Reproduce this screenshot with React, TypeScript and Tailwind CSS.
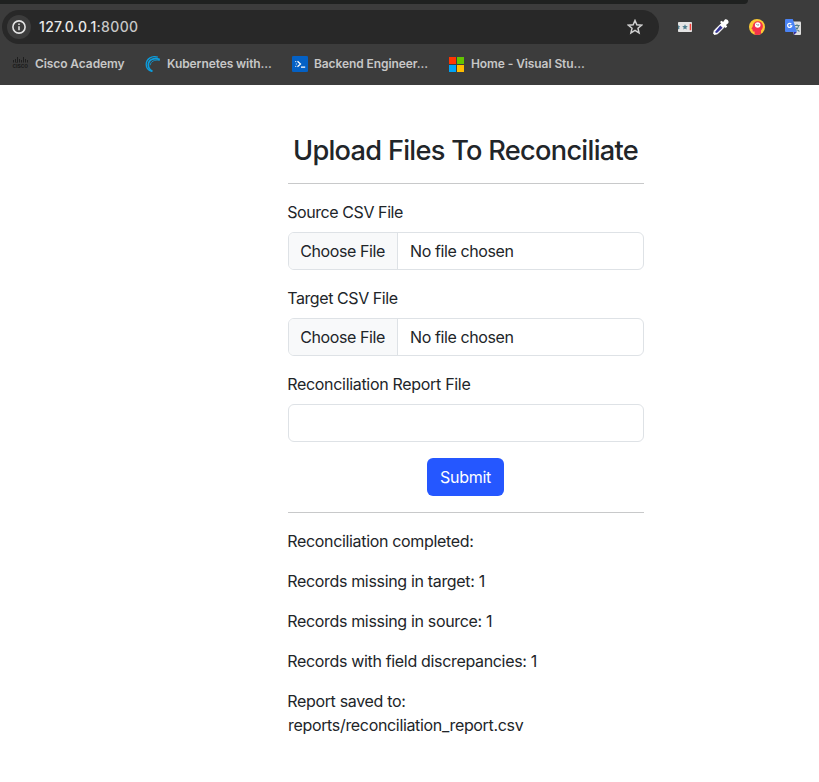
import type { ReactNode } from "react";

function InfoIcon() {
  return (
    <svg width="14" height="14" viewBox="0 0 14 14" fill="none">
      <circle cx="7" cy="7" r="6.1" stroke="#e3e3e3" strokeWidth="1.6" />
      <path d="M7 6.3v4M7 3.6v1.5" stroke="#e3e3e3" strokeWidth="1.5" />
    </svg>
  );
}

function StarIcon() {
  return (
    <svg width="16" height="16" viewBox="0 0 16 16" fill="none" stroke="#d0d0d0" strokeWidth="1.5">
      <path d="M8 1.5l1.85 4.3 4.7.4-3.56 3.1 1.07 4.6L8 11.45 3.94 13.9 5 9.3 1.45 6.2l4.7-.4z" />
    </svg>
  );
}

function TicketIcon() {
  return (
    <svg width="14" height="10" viewBox="0 0 14 10">
      <rect width="14" height="10" rx="0.8" fill="#e4e4e4" />
      <path d="M0 2.6l.8 1.5 1.4.2-1 1 .2 1.6L0 7.2z" fill="#4e7c8d" />
      <path d="M7 2.2l.8 1.8 2 .2-1.5 1.3.4 1.9L7 6.4l-1.7 1 .4-1.9-1.5-1.3 2-.2z" fill="#4e7c8d" />
      <rect x="11.7" y="1.8" width="1.5" height="6.4" fill="#f1423d" />
    </svg>
  );
}

function DropperIcon() {
  return (
    <svg width="16" height="16" viewBox="0 0 16 16">
      <path d="M8.6 4.3l3.2 3.2-7.2 7.3-3.4.6-.6-.6.7-3.4z" fill="#fff" stroke="#fff" strokeWidth="1" />
      <path d="M7.3 6.4l2.3 2.3-5.4 5.1-1.7.1.1-1.7z" fill="#353596" />
      <path d="M7 3.1l1.6-1.4 1.5 1.2 1.6-2.1c1.6-1.5 5.1 1.2 3.5 3.4L13 6.1l1.2 1.4-1.5 1.4z" fill="#fff" />
    </svg>
  );
}

function HeadIcon() {
  return (
    <svg width="16" height="16" viewBox="0 0 16 16">
      <circle cx="8" cy="8" r="8" fill="#fcc934" />
      <path d="M5.6 15.6v-3.1H3.9l-.5-2.2-1-.5 1.4-2.6C3.9 4.3 6 2.2 8.9 2.2c3.2 0 5 2.2 5 4.8 0 2.1-1.1 3.4-1.9 4.6v3.3A8 8 0 015.6 15.6z" fill="#f5334c" />
      <circle cx="8.7" cy="6" r="2.8" fill="#fff" />
      <path d="M7.2 4.8l1.5 1.5 1.4-.7" fill="none" stroke="#777" strokeWidth=".9" />
    </svg>
  );
}

function TranslateIcon() {
  return (
    <svg width="16" height="16" viewBox="0 0 16 16">
      <path d="M5 2.6h10q1 0 1 1V15q0 1-1 1H9z" fill="#dedede" />
      <path d="M9.5 6.5h5.2M12 5.2v1.3M13.7 6.7c-.5 2.6-2 4.4-3.8 5.5M10.8 8.4c.7 1.8 1.8 3 3.6 4" stroke="#557f89" strokeWidth="1.1" fill="none" />
      <path d="M8.5 13h3.4L9 16z" fill="#3730a3" />
      <path d="M1 0h6.8l4.1 13H1q-1 0-1-1V1q0-1 1-1z" fill="#4a83f4" />
      <path d="M6.3 5A2.1 2.1 0 106.8 6.8H4.8" fill="none" stroke="#fff" strokeWidth="1.2" />
    </svg>
  );
}

function CiscoIcon() {
  return (
    <svg width="17" height="16" viewBox="0 0 17 16">
      <path d="M1.5 4v2.5M3.5 3v3.5M5.5 1v5.5M7.5 3v3.5M9.5 4v2.5M11.5 1v5.5M13.5 3v3.5M15.5 4v2.5" stroke="#1c1c1c" strokeWidth=".9" />
      <text x="0.5" y="12.4" textLength="15.5" lengthAdjust="spacingAndGlyphs" fontSize="6.6" fontWeight="700" fontFamily="Inter, sans-serif" fill="#1c1c1c">cisco</text>
    </svg>
  );
}

function SwirlIcon() {
  return (
    <svg width="16" height="16" viewBox="0 0 16 16" fill="none">
      <path d="M12.8 1.2C6.5-.8 1.2 3.2 1.2 8.4c0 3.3 2.2 6 5.8 7" stroke="#0c9ddd" strokeWidth="1.3" />
      <path d="M14.8 3.6C8.5 1.2 3.3 4.2 3.3 9c0 2.6 1.4 4.8 4.2 6.4" stroke="#0c9ddd" strokeWidth="1.7" />
      <path d="M14.7 4.4C9.5 3.3 5.6 5.6 5.2 9.2" stroke="#0c9ddd" strokeWidth=".8" />
    </svg>
  );
}

function TerminalIcon() {
  return (
    <svg width="16" height="16" viewBox="0 0 16 16" fill="none">
      <rect width="16" height="16" rx="1.3" fill="#0461c5" />
      <path d="M5.5 5.2l3 2.8-3 2.8M9 11h4.2" stroke="#fff" strokeWidth="1.25" />
      <path d="M3 5.6h1.3M3.8 8h1.3M3 10.4h1.3" stroke="#c6def7" strokeWidth="1" />
    </svg>
  );
}

function WindowsIcon() {
  return (
    <svg width="15" height="15" viewBox="0 0 15 15" shapeRendering="crispEdges">
      <path d="M0 0h7v7H0z" fill="#ff3502" />
      <path d="M8 0h7v7H8z" fill="#62c400" />
      <path d="M0 8h7v7H0z" fill="#00a3f5" />
      <path d="M8 8h7v7H8z" fill="#ffbc00" />
    </svg>
  );
}

function Bookmark({ icon, className, children }: { icon: ReactNode; className: string; children: ReactNode }) {
  return (
    <div className={`flex h-4 items-center whitespace-nowrap ${className}`}>
      {icon}
      <span>{children}</span>
    </div>
  );
}

function BrowserChrome() {
  return (
    <header className="h-[85px] bg-[#3c3c3c]">
      <div className="h-1 w-[748px] rounded-br-[10px] bg-[#1f2120]" />
      <div className="mt-[6px] flex h-[34px] items-center pl-[2px]">
        <div className="flex h-[34px] w-[657px] items-center rounded-full bg-[#282828] pl-[5px] pr-4">
          <span className="flex size-6 items-center justify-center rounded-full bg-[#3c3c3c]">
            <InfoIcon />
          </span>
          <span className="ml-2 flex-1 pb-px text-[14px] font-medium tracking-[0.33px] text-[#e8e8e8]">
            127.0.0.1<span className="text-[#c7c7c7]">:8000</span>
          </span>
          <StarIcon />
        </div>
        <div className="ml-[19px] flex items-center">
          <TicketIcon />
          <span className="ml-[21px]"><DropperIcon /></span>
          <span className="ml-5"><HeadIcon /></span>
          <span className="ml-5"><TranslateIcon /></span>
        </div>
      </div>
      <nav className="mt-3 flex items-center pl-3 text-[12px] font-semibold tracking-[-0.09px] text-[#c7c7c7]">
        <Bookmark icon={<CiscoIcon />} className="w-[133px] gap-[6px]">Cisco Academy</Bookmark>
        <Bookmark icon={<SwirlIcon />} className="w-[147px] gap-[6px]">Kubernetes with...</Bookmark>
        <Bookmark icon={<TerminalIcon />} className="w-[157px] gap-[6px]">Backend Engineer...</Bookmark>
        <Bookmark icon={<WindowsIcon />} className="gap-[7px]">Home - Visual Stu...</Bookmark>
      </nav>
    </header>
  );
}

function FileField({ label }: { label: string }) {
  return (
    <div className="mb-4">
      <div className="mb-2 h-6 -indent-[0.8px] tracking-[-0.42px]">{label}</div>
      <div className="flex h-[38px] overflow-hidden rounded-md border border-[#dee2e6] bg-white">
        <button className="w-[109px] border-r border-[#dee2e6] bg-[#f8f9fa] pl-[11.2px] text-left tracking-[-0.4px]">Choose File</button>
        <span className="pl-3 leading-9 tracking-[-0.4px]">No file chosen</span>
      </div>
    </div>
  );
}

export default function App() {
  return (
    <div className="h-[782px] overflow-hidden bg-white font-['Inter','Liberation_Sans',sans-serif]">
      <BrowserChrome />
      <main className="ml-[288px] w-[356px] pt-12 text-[16px] leading-6 tracking-[-0.31px] text-[#212529]">
        <h1 className="h-[34px] whitespace-nowrap pr-px text-center text-[27.2px] font-[530] leading-[36px] tracking-[-0.72px]">
          Upload Files To Reconciliate
        </h1>
        <hr className="mb-4 mt-4 border-[#c8c9ca]" />
        <FileField label="Source CSV File" />
        <FileField label="Target CSV File" />
        <div className="mb-2 h-6 -indent-[0.8px]">Reconciliation Report File</div>
        <input className="block h-[38px] w-full rounded-md border border-[#dee2e6] bg-white px-3" />
        <button className="ml-[139px] mt-4 block h-[38px] w-[77px] rounded-md bg-[#2557ff] text-white">Submit</button>
        <hr className="my-4 border-[#c8c9ca]" />
        <div className="space-y-4 -indent-[0.8px] tracking-[-0.33px]">
          <p>Reconciliation completed:</p>
          <p>Records missing in target: 1</p>
          <p>Records missing in source: 1</p>
          <p>Records with field discrepancies: 1</p>
          <p>Report saved to:<br />reports/reconciliation_report.csv</p>
        </div>
      </main>
    </div>
  );
}
